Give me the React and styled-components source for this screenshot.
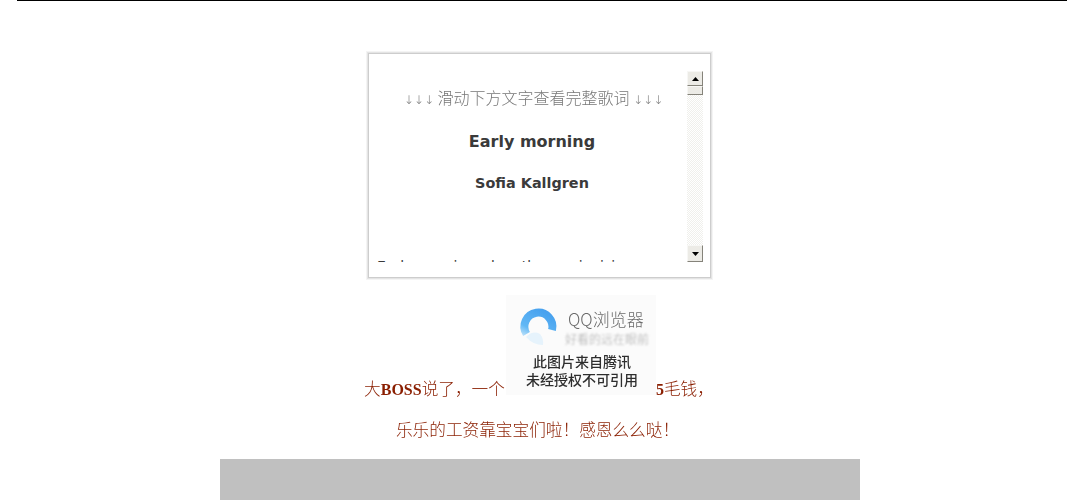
import React from 'react';
import styled, { createGlobalStyle } from 'styled-components';

const GlobalStyle = createGlobalStyle`
  html, body {
    margin: 0;
    height: 500px;
    overflow: hidden;
    background: #fff;
  }
`;

const TopRule = styled.div`
  width: 1050px;
  margin-left: 17px;
  border-top: 1px solid #000;
`;

const Column = styled.main`
  width: 640px;
  margin: 51px auto 0;
  display: flex;
  flex-direction: column;
  align-items: center;
`;

const LyricBox = styled.section`
  box-sizing: border-box;
  width: 345px;
  height: 227px;
  margin-left: -1px;
  padding: 18px 8px 16px 9px;
  border: 1px solid #e4e4e4;
  box-shadow: inset 0 0 0 1px #cdcdcd, 0 0 0 1px #f4f4f4;
  display: flex;
  background: #fff;
`;

const LyricScroll = styled.div`
  flex: 1;
  overflow: hidden;
  font-family: 'DejaVu Sans', sans-serif;
  color: #3a3a3a;
`;

const Hint = styled.p`
  margin: 16px 0 0;
  padding-left: 3px;
  text-align: center;
  font: 300 16px/20px 'Noto Sans CJK SC', sans-serif;
  color: #777;
  white-space: nowrap;
  opacity: 0.999;
`;

const Arrows = styled.span`
  font-family: 'DejaVu Sans', sans-serif;
  font-size: 12px;
`;

const SongTitle = styled.h2`
  margin: 22px 0 0;
  text-align: center;
  font-size: 16px;
  line-height: 20px;
  font-weight: 700;
`;

const Artist = styled.h3`
  margin: 21px 0 0;
  text-align: center;
  font-size: 14.4px;
  line-height: 20px;
  font-weight: 700;
`;

const LyricLine = styled.p`
  margin: 63px 0 0;
  font-size: 14px;
  line-height: 20px;
  white-space: nowrap;
`;

const Scrollbar = styled.div`
  width: 16px;
  display: flex;
  flex-direction: column;
  background-color: #fff;
  background-image: repeating-conic-gradient(#f0f0ec 0 25%, #fff 0 50%);
  background-size: 2px 2px;
`;

const ScrollPart = styled.div`
  box-sizing: border-box;
  height: ${p => p.$height}px;
  display: flex;
  align-items: center;
  justify-content: center;
  background: #ecebe6;
  border: 1px solid;
  border-color: #f7f7f5 #85837a #85837a #f7f7f5;
  margin-top: ${p => p.$push || 0}px;
`;

const Triangle = styled.svg`
  width: 7px;
  height: 4px;
  display: block;
`;

const Promo = styled.p`
  box-sizing: border-box;
  margin: 16px 0 0;
  width: 640px;
  padding-right: 2px;
  text-align: center;
  font: 300 16.67px/20px 'Noto Sans CJK SC', sans-serif;
  color: #8a1e00;
  white-space: nowrap;
  opacity: 0.999;
`;

const PromoSecond = styled(Promo)`
  margin-top: 19px;
  padding-right: 5px;
`;

const Latin = styled.b`
  font-family: 'Liberation Serif', serif;
  font-size: 16px;
  font-weight: 700;
`;

const Picture = styled.svg`
  display: inline-block;
  width: 150px;
  height: 100px;
  margin-left: 1px;
  vertical-align: baseline;
`;

const BottomBand = styled.div`
  width: 640px;
  height: 60px;
  margin-top: 20px;
  background: #c0c0c0;
`;

function WatermarkPicture() {
  const cjk = "'Noto Sans CJK SC', sans-serif";
  return (
    <Picture viewBox="0 0 150 100" role="img" aria-label="QQ浏览器">
      <defs>
        <linearGradient id="ring" gradientUnits="userSpaceOnUse" x1="36" y1="14" x2="20" y2="46">
          <stop offset="0" stopColor="#46a0ee" />
          <stop offset="0.65" stopColor="#62b8f5" />
          <stop offset="1" stopColor="#d6edfb" />
        </linearGradient>
        <filter id="soft">
          <feGaussianBlur stdDeviation="0.4" />
        </filter>
        <filter id="softer">
          <feGaussianBlur stdDeviation="0.8" />
        </filter>
      </defs>
      <rect width="150" height="100" fill="#fbfbfb" />
      <g filter="url(#soft)">
        <g transform="translate(1 0)">
          <path d="M19.5 39 A14 14 0 1 1 45 35" fill="none" stroke="url(#ring)" strokeWidth="8" />
          <path d="M19 42 Q26 35 33 39 Q37 44 36 50 Q26 50 19 42Z" fill="#e6f3fc" />
        </g>
        <text x="62" y="31" fontFamily={cjk} fontSize="17" fontWeight="300" fill="#6b6b6b">QQ浏览器</text>
        <text x="76" y="72" textAnchor="middle" fontFamily={cjk} fontSize="14" fontWeight="500" fill="#2e2e2e">此图片来自腾讯</text>
        <text x="76" y="90" textAnchor="middle" fontFamily={cjk} fontSize="14" fontWeight="500" fill="#2e2e2e">未经授权不可引用</text>
      </g>
      <text x="59" y="49" filter="url(#softer)" fontFamily={cjk} fontSize="12" fill="#a8a8a8">好看的远在眼前</text>
    </Picture>
  );
}

export default function App() {
  return (
    <>
      <GlobalStyle />
      <TopRule />
      <Column>
        <LyricBox>
          <LyricScroll>
            <Hint>
              <Arrows>↓↓↓</Arrows> 滑动下方文字查看完整歌词 <Arrows>↓↓↓</Arrows>
            </Hint>
            <SongTitle>Early morning</SongTitle>
            <Artist>Sofia Kallgren</Artist>
            <LyricLine>Early morning when the sun is rising</LyricLine>
          </LyricScroll>
          <Scrollbar>
            <ScrollPart $height={15}>
              <Triangle viewBox="0 0 7 4"><path d="M3.5 0 7 4H0z" fill="#000" /></Triangle>
            </ScrollPart>
            <ScrollPart $height={9} />
            <ScrollPart $height={17} $push={150}>
              <Triangle viewBox="0 0 7 4"><path d="M0 0h7L3.5 4z" fill="#000" /></Triangle>
            </ScrollPart>
          </Scrollbar>
        </LyricBox>
        <Promo>
          大<Latin>BOSS</Latin>说了，一个<WatermarkPicture /><Latin>5</Latin>毛钱，
        </Promo>
        <PromoSecond>乐乐的工资靠宝宝们啦！感恩么么哒！</PromoSecond>
        <BottomBand />
      </Column>
    </>
  );
}
